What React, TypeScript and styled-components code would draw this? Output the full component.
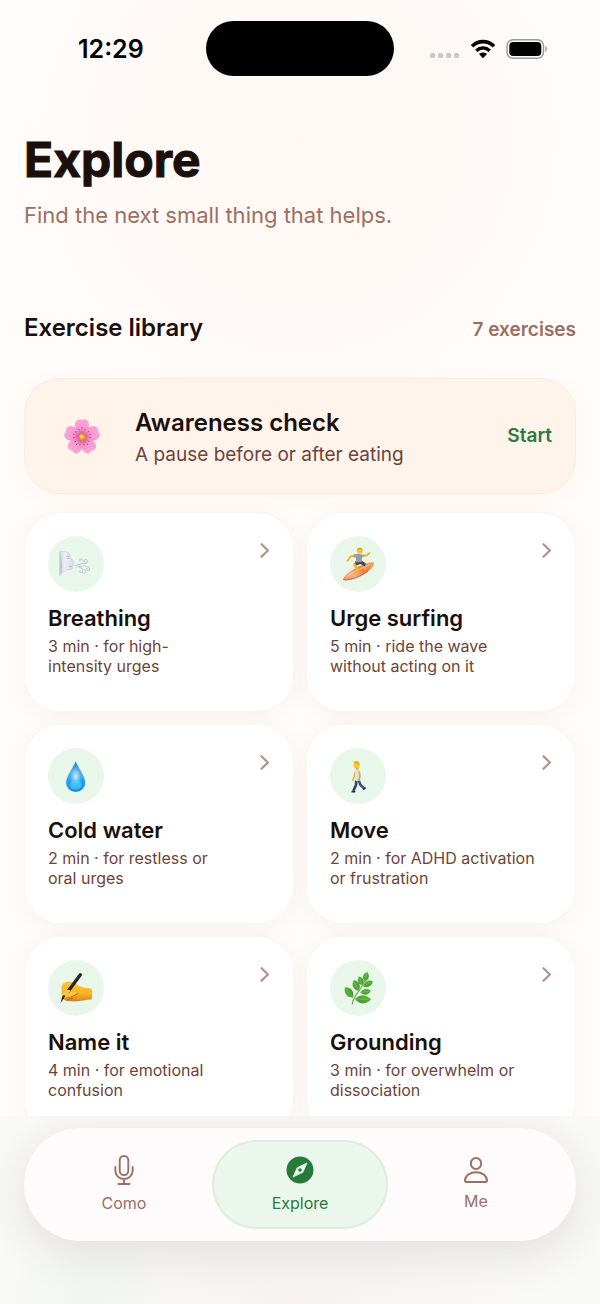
import React from "react";
import styled, { createGlobalStyle } from "styled-components";

const GlobalStyle = createGlobalStyle`
  *, *::before, *::after { box-sizing: border-box; }
  body {
    margin: 0;
    background: #fffcf9;
    color: #1a0f0a;
    font-family: Inter, "Liberation Sans", sans-serif;
  }
  h1, h2, h3, p { margin: 0; }
  button { font: inherit; color: inherit; border: 0; background: none; padding: 0; text-align: left; cursor: pointer; }
`;

const Screen = styled.div`
  display: flex;
  flex-direction: column;
  height: 100vh;
  background: radial-gradient(circle 310px at 50% 140px, #fff7f4 0%, #fff9f6 45%, #fffcf9 100%);
`;

const StatusBar = styled.header`
  display: grid;
  grid-template-columns: 1fr 188px 1fr;
  align-items: center;
  flex: none;
  padding-top: 21px;
  color: #000;
`;

const Clock = styled.time`
  padding-left: 78px;
  font-size: 25px;
  line-height: 30px;
  font-weight: 600;
`;

const Island = styled.div`
  height: 55px;
  border-radius: 28px;
  background: #000;
`;

const StatusIcons = styled.div`
  display: flex;
  align-items: center;
  justify-content: flex-end;
  gap: 10px;
  padding-right: 52px;
`;

const Scroller = styled.main`
  flex: 1;
  min-height: 0;
  overflow-y: auto;
  scrollbar-width: none;
  padding: 54px 24px 24px;
`;

const Title = styled.h1`
  font-size: 48px;
  line-height: 60px;
  font-weight: 700;
  -webkit-text-stroke: 1px #1a0f0a;
  stroke-linejoin: round;
`;

const Subtitle = styled.p`
  margin-top: 10px;
  font-size: 22px;
  line-height: 30px;
  color: #9c6f63;
`;

const SectionHead = styled.div`
  display: flex;
  align-items: baseline;
  justify-content: space-between;
  margin: 82px 0 34px;
`;

const SectionTitle = styled.h2`
  font-size: 24px;
  line-height: 32px;
  font-weight: 600;
`;

const Count = styled.span`
  font-size: 19px;
  line-height: 24px;
  font-weight: 600;
  color: #9c6f63;
`;

const Featured = styled.button`
  display: flex;
  align-items: center;
  gap: 19px;
  width: 100%;
  padding: 24px;
  border-radius: 36px;
  background: #fff4eb;
  box-shadow: inset 0 0 0 1px #fbebe0, 0 4px 24px rgba(150, 70, 50, 0.04);
`;

const FeaturedText = styled.span`
  display: flex;
  flex: 1;
  flex-direction: column;
  gap: 4px;
  padding-top: 1px;
`;

const FeaturedTitle = styled.span`
  font-size: 24px;
  line-height: 32px;
  font-weight: 600;
`;

const FeaturedNote = styled.span`
  font-size: 19px;
  line-height: 24px;
  color: #6d4439;
`;

const Start = styled.span`
  font-size: 19px;
  line-height: 24px;
  font-weight: 600;
  color: #2a7a3c;
`;

const Grid = styled.div`
  display: grid;
  grid-template-columns: 1fr 1fr;
  gap: 12px;
  margin-top: 18px;
`;

const Card = styled.button`
  display: flex;
  flex-direction: column;
  min-height: 200px;
  padding: 24px;
  border-radius: 36px;
  background: #fff;
  box-shadow: inset 0 0 0 1px #f8f5f4, 0 4px 24px rgba(130, 55, 40, 0.05);
`;

const CardTop = styled.span`
  display: flex;
  justify-content: space-between;
  width: 100%;
`;

const Emoji = styled.svg<{ $size: number; $fill: string }>`
  width: ${(p) => p.$size}px;
  height: ${(p) => p.$size}px;
  flex: none;
  border-radius: 50%;
  background: ${(p) => p.$fill};
`;

const Chevron = styled.svg`
  width: 12px;
  height: 28px;
`;

const CardTitle = styled.span`
  margin-top: 12px;
  font-size: 22px;
  line-height: 28px;
  font-weight: 600;
`;

const CardNote = styled.span`
  margin-top: 4px;
  font-size: 16px;
  line-height: 20px;
  color: #6d4439;
  white-space: pre-line;
`;

const Footer = styled.footer`
  flex: none;
  padding: 12px 24px 63px;
  overflow: hidden;
  background:
    radial-gradient(ellipse 90px 70px at 15% 100%, rgba(228, 240, 226, 0.4), transparent),
    radial-gradient(ellipse 220px 70px at 50% 100%, rgba(246, 236, 232, 0.5), transparent),
    #f9f9f7;
`;

const TabBar = styled.nav`
  display: grid;
  grid-template-columns: repeat(3, 1fr);
  padding: 12px;
  border-radius: 57px;
  background: #fdfbfc;
  box-shadow: 0 12px 48px rgba(40, 35, 40, 0.12);
`;

const Tab = styled.button<{ $active?: boolean }>`
  display: flex;
  flex-direction: column;
  align-items: center;
  justify-content: center;
  gap: 7px;
  height: 89px;
  border-radius: 45px;
  font-size: 16px;
  line-height: 22px;
  color: ${(p) => (p.$active ? "#287a3b" : "#9c6f63")};
  background: ${(p) => (p.$active ? "#ebf7ed" : "transparent")};
  box-shadow: ${(p) => (p.$active ? "inset 0 0 0 2px #e0ebe2" : "none")};
`;

const TabIcon = styled.svg<{ $h: number }>`
  width: 30px;
  height: ${(p) => p.$h}px;
`;

const Flower = () => (
  <Emoji $size={68} $fill="#fff3ea" viewBox="0 0 68 68" aria-hidden="true">
    <defs>
      <radialGradient id="petal" gradientUnits="userSpaceOnUse" cx="34" cy="34" r="18">
        <stop offset="0.1" stopColor="#e0559b" />
        <stop offset="0.4" stopColor="#f794cd" />
        <stop offset="1" stopColor="#fbaadb" />
      </radialGradient>
    </defs>
    {[0, 72, 144, 216, 288].map((a) => (
      <g key={a} transform={`rotate(${a} 34 35)`}>
        <path d="M34 35C28.500 30.500 26.500 25 27.600 21C28.700 17.800 31.500 16.800 34 18.800C36.500 16.800 39.300 17.800 40.400 21C41.500 25 39.500 30.500 34 35Z" fill="url(#petal)" stroke="#ee86c2" strokeWidth=".5" />
        <path d="M34 33V26.500M33 32L31 27.500M35 32L37 27.500" stroke="#d95fa2" strokeWidth=".5" />
        <circle cx="34" cy="25.800" r=".5" fill="#802c55" />
        <circle cx="31" cy="27.300" r=".5" fill="#802c55" />
        <circle cx="37" cy="27.300" r=".5" fill="#802c55" />
      </g>
    ))}
    <circle cx="34" cy="35" r="3.200" fill="#eab12e" stroke="#cf8420" strokeWidth=".6" />
    <circle cx="33.500" cy="34.500" r="1.300" fill="#ffe27a" />
  </Emoji>
);

const Wind = () => (
  <>
    <defs>
      <linearGradient id="face" x1="0" x2="1">
        <stop offset="0" stopColor="#cfd2e1" />
        <stop offset="0.35" stopColor="#eceef5" />
        <stop offset="1" stopColor="#d8dbe8" />
      </linearGradient>
    </defs>
    <path d="M11.500 15.700C16 15.400 20.500 15.400 21.500 18C22 19.500 21.800 20.500 23 22C24.200 23.500 26.300 25.500 25.300 27L24 27.500L26 29.200L24.500 30.500C25 32.500 24 33.800 21.500 33.500C18 33.200 16.500 35.500 14.500 37L11.500 39.700Z" fill="url(#face)" stroke="#bfc3d4" strokeWidth=".5" />
    <path d="M12 18V38L14 36V27C13 24 14 20 12 18Z" fill="#b3b7cc" opacity=".6" />
    <path d="M18.500 20.500C19.500 19.700 20.500 20 21 21M19.500 22.500H21.500M21 30.500H24" fill="none" stroke="#a3a8be" strokeWidth=".7" />
    <path d="M27 29.500C31 29 32 27 36 27.800C40 28 40.500 23.500 37.500 23.500C35.500 23.500 35.500 26 37.300 25.800M28 31C32 30 36 29.500 39.500 30.500C42.500 31 42 34.800 39.800 34.500C38 34.300 38.500 32.300 39.800 32.600M31 31.500C34 31.500 35.500 33 34.800 35C34 37.500 31 36.500 32 34.800M34.500 24.500C33.800 22 30.800 23 32 24.800M36.500 33.500C38.500 35 36.500 38 35 37" fill="none" stroke="#c5cad5" strokeWidth="1.100" strokeLinecap="round" />
    <path d="M28 30.200C32 29 36 29 39 29.600" fill="none" stroke="#f2f4f8" strokeWidth=".6" />
  </>
);

const Surfer = () => (
  <>
    <defs>
      <linearGradient id="board" x1="0" y1="1" x2="1" y2="0">
        <stop offset="0" stopColor="#f58a4c" />
        <stop offset="0.3" stopColor="#f8b18a" />
        <stop offset="0.6" stopColor="#ee7f4a" />
        <stop offset="1" stopColor="#f6a45d" />
      </linearGradient>
    </defs>
    <path d="M13 43.700C14 38 26 31 34 28.200C38 26.800 42 25.800 44 26.600C45 29 40 35 34 38.500C27 42.500 18 45.500 13 43.700Z" fill="url(#board)" />
    <path d="M16 41.500C22 36.500 30 32.500 40 28.800" fill="none" stroke="#fdd3ba" strokeWidth="1" />
    <path d="M13 43.700C20 45 32 40 38 34.500" fill="none" stroke="#bd542e" strokeWidth=".7" />
    <path d="M27.500 26L24.500 28.500L27.500 34L25 37" fill="none" stroke="#f1b72d" strokeWidth="2.800" strokeLinejoin="round" strokeLinecap="round" />
    <path d="M31 26.500L34.500 28L35 32.500" fill="none" stroke="#f1b72d" strokeWidth="2.500" strokeLinecap="round" />
    <path d="M25 25.500L31.500 24.500L35.800 27.500L35 30.500L30.500 28L26 29.500Z" fill="#454a57" />
    <path d="M26 19L20.500 20.500L17.500 25" fill="none" stroke="#efb42b" strokeWidth="2" strokeLinecap="round" strokeLinejoin="round" />
    <path d="M32 19.500L36.500 19.500L39.500 17" fill="none" stroke="#efb42b" strokeWidth="1.800" strokeLinecap="round" strokeLinejoin="round" />
    <path d="M23.500 18.700L28 17.800L34 19L33.500 21L32 21.500L31.500 26L26 26.300L26 21.500L23.500 21.500Z" fill="#979ca7" />
    <circle cx="29.800" cy="14.800" r="2.900" fill="#f8c52e" />
    <path d="M26.900 14C27.200 11 32.300 10.800 32.700 14L30 12.900Z" fill="#dda01d" />
  </>
);

const Drop = () => (
  <>
    <defs>
      <linearGradient id="water" x1="0" y1="0" x2="0" y2="1">
        <stop offset="0" stopColor="#2586cb" />
        <stop offset="0.4" stopColor="#49abe6" />
        <stop offset="0.75" stopColor="#189eea" />
        <stop offset="1" stopColor="#128cdc" />
      </linearGradient>
      <radialGradient id="shine">
        <stop offset="0" stopColor="#d9f4ff" />
        <stop offset="1" stopColor="#7bcdf8" stopOpacity="0" />
      </radialGradient>
    </defs>
    <path d="M27.700 13C29 18 37.300 28 37.300 34.700A9.600 9.400 0 0 1 18.100 34.700C18.100 28 26.400 18 27.700 13Z" fill="url(#water)" />
    <ellipse cx="27.700" cy="28.500" rx="6.500" ry="11" fill="url(#shine)" />
    <ellipse cx="27.700" cy="37" rx="6" ry="4.500" fill="#55d0ff" opacity=".6" />
  </>
);

const Walker = () => (
  <>
    <path d="M26.300 32L26 37L23.300 43" fill="none" stroke="#33446e" strokeWidth="2.700" strokeLinejoin="round" />
    <path d="M28.500 32L30.500 37L34.300 40.500" fill="none" stroke="#3d5080" strokeWidth="2.700" strokeLinejoin="round" />
    <path d="M21.500 43.700H25.300M33.300 41.800L35.600 39.600" stroke="#252b3c" strokeWidth="1.500" />
    <path d="M25.300 24L24 29L22.800 32" fill="none" stroke="#efb42b" strokeWidth="1.700" strokeLinecap="round" />
    <path d="M25 22Q27.500 20.500 29.700 22.500L30.200 32.500L25.500 33.300Z" fill="#d9dde6" />
    <path d="M29.300 24L30 28L29 32" fill="none" stroke="#e8a928" strokeWidth="1.700" strokeLinecap="round" />
    <rect x="26" y="18" width="2.600" height="3.600" fill="#dda12c" />
    <ellipse cx="26.500" cy="16.900" rx="3" ry="3.600" fill="#fac832" />
    <path d="M23.500 14.800C24.500 12.600 29.200 12.800 29.500 15.700L29.200 18L28 15.800Z" fill="#e7aa1c" />
  </>
);

const Writing = () => (
  <>
    <defs>
      <linearGradient id="hand" x1="0" y1="0" x2="0" y2="1">
        <stop offset="0" stopColor="#fdc63c" />
        <stop offset="0.6" stopColor="#f8b227" />
        <stop offset="1" stopColor="#d8861b" />
      </linearGradient>
    </defs>
    <path d="M13.500 28C13 24.500 16.500 22 20.500 21.500C24 21 29 25 33 26.500C37 28 40 28.300 43.500 28.500C44.500 31.500 44.300 36 43.700 39.500C39 39.300 37 40.500 33 40.800C29 41.500 25 41.600 20 41C16.500 41 14 38.500 13.700 35Z" fill="url(#hand)" />
    <path d="M13.700 34C17 31 19.500 31.500 21 33.500C22.500 31.500 26 31 29 33.500C26 36.500 20 38.500 15.500 38.500Z" fill="#fdc43d" />
    <path d="M17 39C19 36.500 22 38 25.500 36L30 33.500M18.500 40.500C20 38.500 23 39.800 25 38" fill="none" stroke="#b7641b" strokeWidth=".9" />
    <path d="M32.300 14.800L20 31.500" stroke="#222326" strokeWidth="3.400" strokeLinecap="round" />
    <path d="M17.500 36L12.700 43L14 37L15.700 35Z" fill="#222326" />
    <path d="M31 15.500L23 26" stroke="#55575c" strokeWidth=".6" />
    <path d="M16 31.500C19 29 22 29.500 23 31.500C20 33 18.500 35 15 34.500Z" fill="#fdc43a" />
  </>
);

const Herb = () => (
  <>
    <defs>
      <linearGradient id="leaf" x1="0" y1="0" x2="1" y2="1">
        <stop offset="0" stopColor="#66b842" />
        <stop offset="1" stopColor="#3a962e" />
      </linearGradient>
    </defs>
    <path d="M22.300 44C22.700 38.500 26 34.500 30 29.500C32.500 26 34.500 22.500 35.700 18" fill="none" stroke="#7ba45b" strokeWidth="1.200" strokeLinecap="round" />
    {[
      [23, 37.500, -38, 13, 7.500],
      [28.500, 31, -23, 12, 7],
      [32, 25, -18, 9, 6],
      [34.500, 21.500, 16, 10, 6],
      [33.300, 26.500, 60, 11, 6],
      [30.500, 32.500, 82, 10.500, 6],
      [25, 39, 92, 16, 8.500],
    ].map(([x, y, a, l, w]) => (
      <g key={a} transform={`translate(${x} ${y}) rotate(${a})`}>
        <path d={`M0 0C${-w * 0.7} ${-l * 0.3} ${-w * 0.6} ${-l * 0.75} 0 ${-l}C${w * 0.6} ${-l * 0.75} ${w * 0.7} ${-l * 0.3} 0 0Z`} fill="url(#leaf)" />
        <path d={`M0 0V${-l * 0.8}`} stroke="#86c661" strokeWidth=".5" />
      </g>
    ))}
  </>
);

const exercises = [
  { title: "Breathing", note: "3 min · for high-\nintensity urges", Art: Wind },
  { title: "Urge surfing", note: "5 min · ride the wave\nwithout acting on it", Art: Surfer },
  { title: "Cold water", note: "2 min · for restless or\noral urges", Art: Drop },
  { title: "Move", note: "2 min · for ADHD activation\nor frustration", Art: Walker },
  { title: "Name it", note: "4 min · for emotional\nconfusion", Art: Writing },
  { title: "Grounding", note: "3 min · for overwhelm or\ndissociation", Art: Herb },
];

export default function App() {
  return (
    <Screen>
      <GlobalStyle />
      <StatusBar>
        <Clock>12:29</Clock>
        <Island />
        <StatusIcons>
          <svg width="31" height="20" viewBox="0 0 31 20" fill="#cbc8c5" aria-hidden="true">
            {[0, 8, 16, 24].map((x) => (
              <rect key={x} x={x + 1} y="14" width="5" height="5" rx="1.500" />
            ))}
          </svg>
          <svg width="26" height="20" viewBox="0 0 26 20" aria-hidden="true">
            <path d="M2 7.300C8.300 1 17.700 1 24 7.300" fill="none" stroke="#000" strokeWidth="3.600" />
            <path d="M6.300 11.700C10.300 8 15.700 8 19.700 11.700" fill="none" stroke="#000" strokeWidth="3.500" />
            <path d="M9 15C11.300 13 14.700 13 17 15L13 19.200Z" />
          </svg>
          <svg width="42" height="20" viewBox="0 0 42 20" aria-hidden="true">
            <rect x="1" y=".8" width="36.500" height="18.400" rx="6" fill="none" stroke="#9b9997" strokeWidth="1.400" />
            <rect x="3.300" y="3" width="32" height="14" rx="4" />
            <path d="M39.300 7V13C41.400 12 41.400 8 39.300 7Z" fill="#9b9997" />
          </svg>
        </StatusIcons>
      </StatusBar>

      <Scroller>
        <Title>Explore</Title>
        <Subtitle>Find the next small thing that helps.</Subtitle>
        <SectionHead>
          <SectionTitle>Exercise library</SectionTitle>
          <Count>7 exercises</Count>
        </SectionHead>
        <Featured type="button">
          <Flower />
          <FeaturedText>
            <FeaturedTitle>Awareness check</FeaturedTitle>
            <FeaturedNote>A pause before or after eating</FeaturedNote>
          </FeaturedText>
          <Start>Start</Start>
        </Featured>
        <Grid>
          {exercises.map(({ title, note, Art }) => (
            <Card key={title} type="button">
              <CardTop>
                <Emoji $size={56} $fill="#e9f7eb" viewBox="0 0 56 56" aria-hidden="true">
                  <Art />
                </Emoji>
                <Chevron viewBox="0 0 12 28" aria-hidden="true">
                  <path d="M3.500 8.200L9.900 14.500L3.500 20.800" fill="none" stroke="#b6938a" strokeWidth="2.300" strokeLinecap="round" strokeLinejoin="round" />
                </Chevron>
              </CardTop>
              <CardTitle>{title}</CardTitle>
              <CardNote>{note}</CardNote>
            </Card>
          ))}
        </Grid>
      </Scroller>

      <Footer>
        <TabBar>
          <Tab type="button">
            <TabIcon $h={30} viewBox="0 0 30 30" fill="none" stroke="currentColor" strokeWidth="1.900" strokeLinecap="round" aria-hidden="true">
              <rect x="10.700" y="1" width="8.600" height="19" rx="4.300" />
              <path d="M6.300 12V15.300C6.300 20.700 10 24 15 24S23.700 20.700 23.700 15.300V12M15 24V29M9.500 29H20.500" />
            </TabIcon>
            Como
          </Tab>
          <Tab type="button" $active aria-current="page">
            <TabIcon $h={30} viewBox="0 0 30 30" aria-hidden="true">
              <circle cx="15" cy="15" r="13.500" fill="currentColor" />
              <path d="M22 8L17.900 17.300L8 22L12.200 12.700Z" fill="#ebf7ed" stroke="#ebf7ed" strokeWidth=".8" strokeLinejoin="round" />
              <circle cx="15" cy="15" r="1.800" fill="currentColor" />
            </TabIcon>
            Explore
          </Tab>
          <Tab type="button">
            <TabIcon $h={26} viewBox="0 0 30 26" fill="none" stroke="currentColor" strokeWidth="2" aria-hidden="true">
              <ellipse cx="15" cy="6.500" rx="5.200" ry="5.500" />
              <path d="M5.500 25C4.300 25 4 24.300 4 23.300C4.300 18.500 9 15.300 15 15.300S25.700 18.500 26 23.300C26 24.300 25.700 25 24.500 25Z" />
            </TabIcon>
            Me
          </Tab>
        </TabBar>
      </Footer>
    </Screen>
  );
}
